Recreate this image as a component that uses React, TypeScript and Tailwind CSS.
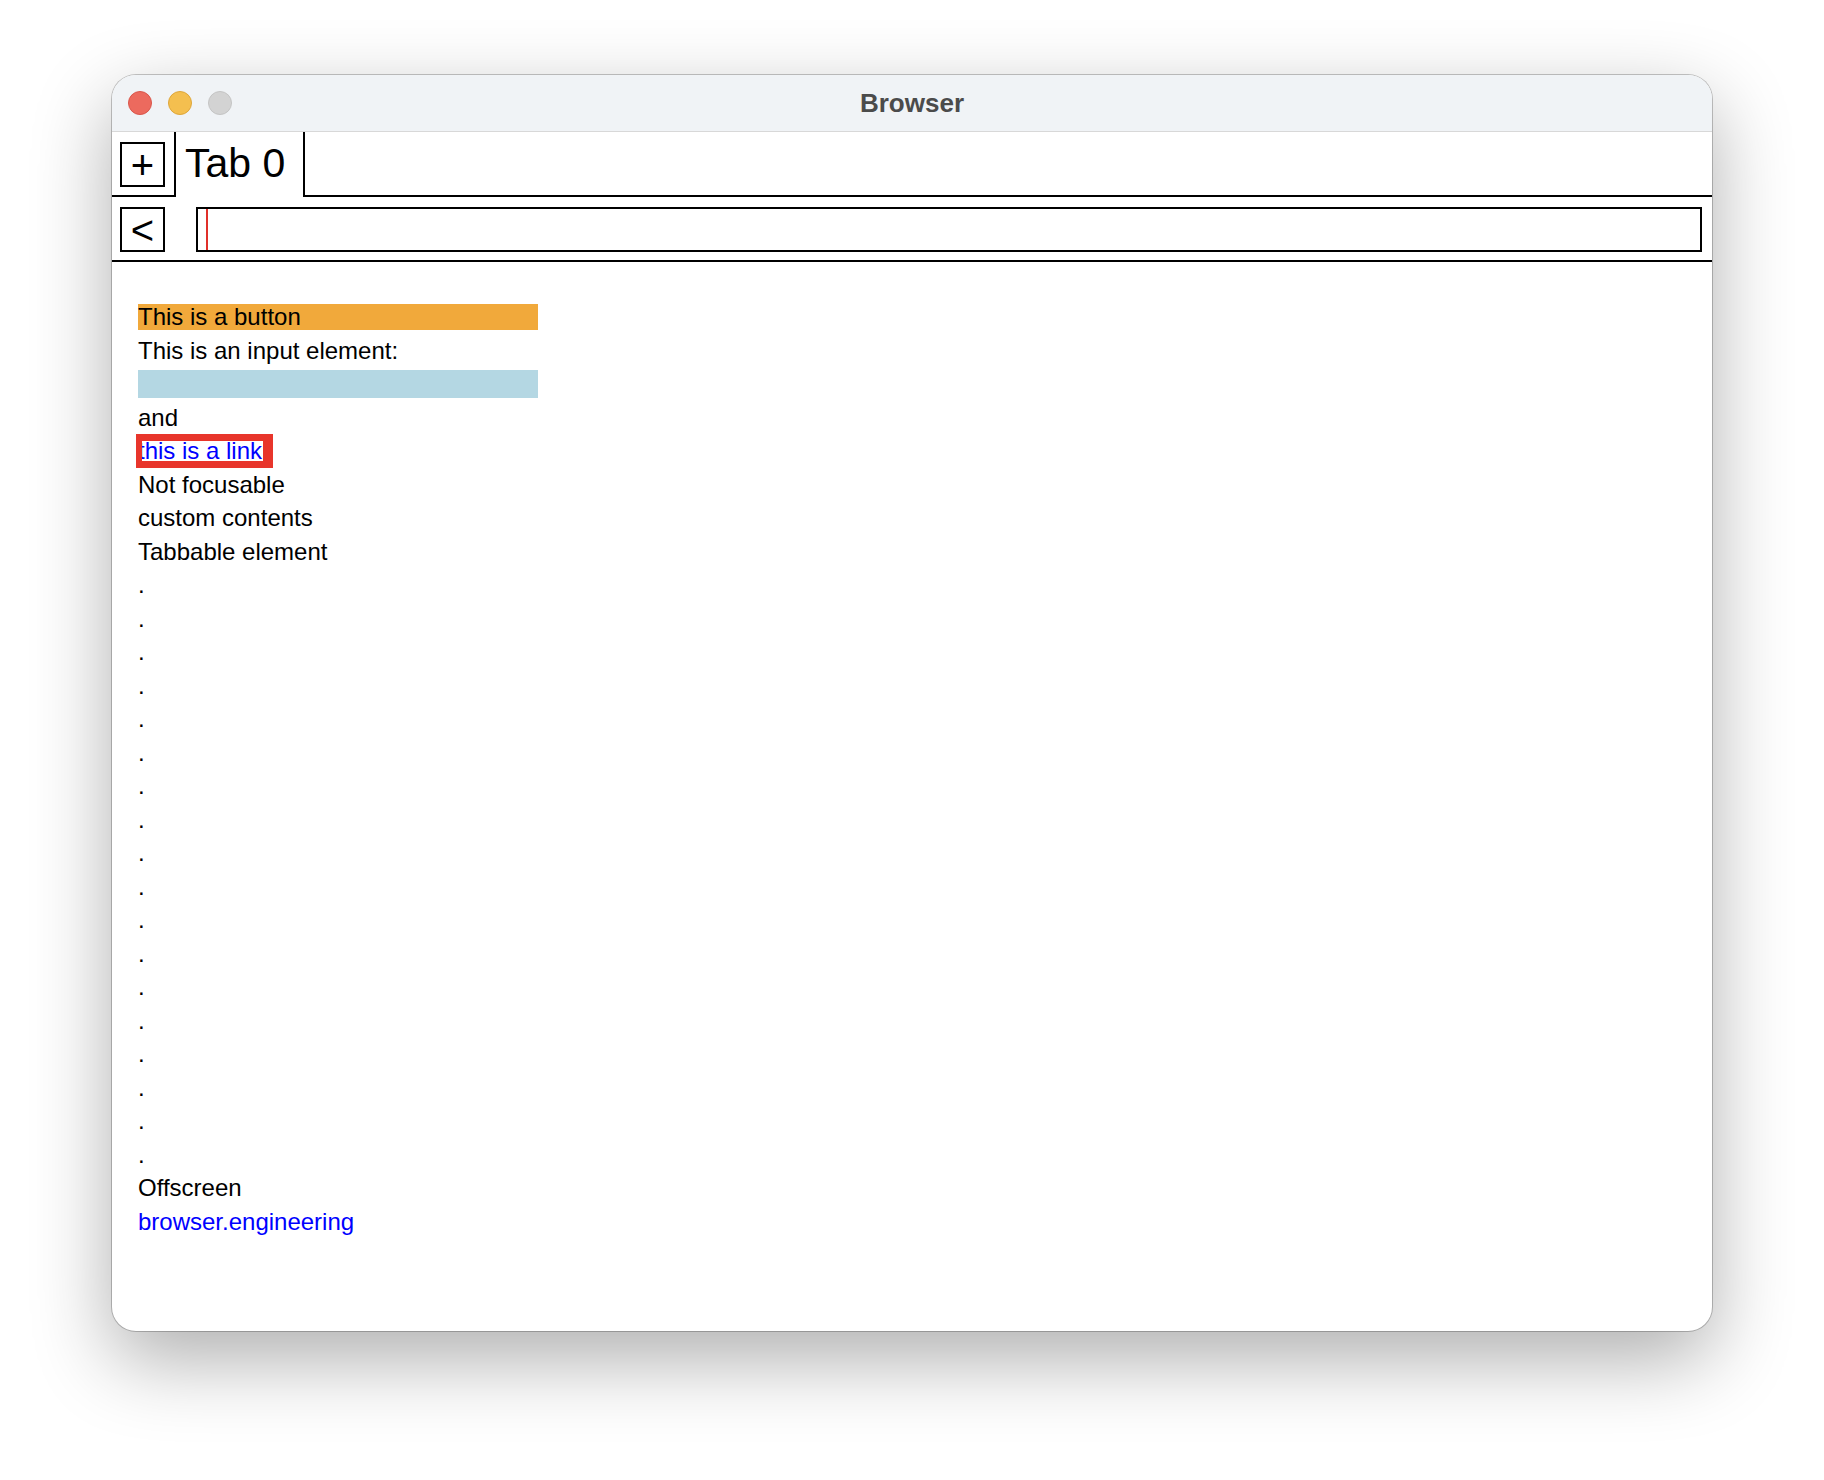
export default function App() {
  const dots = Array.from({ length: 18 }, (_, i) => i);
  return (
    <div className="w-[1824px] h-[1480px] bg-white pt-[75px] pl-[112px] font-['Liberation_Sans',Arial,sans-serif]">
      <div className="w-[1600px] h-[1256px] rounded-[24px] overflow-hidden bg-white shadow-[0_0_0_1px_rgba(0,0,0,0.22),0_28px_80px_rgba(0,0,0,0.32)] flex flex-col">
        {/* Title bar */}
        <div className="h-[57px] shrink-0 bg-[#f0f3f6] border-b border-[#d8d8d8] grid grid-cols-[1fr_auto_1fr] items-center">
          <div className="flex items-center gap-[16px] pl-[16px]">
            <span className="block w-[24px] h-[24px] rounded-full bg-[#ec6a5e] border border-[#d9564b]" />
            <span className="block w-[24px] h-[24px] rounded-full bg-[#f4bf4f] border border-[#dea63a]" />
            <span className="block w-[24px] h-[24px] rounded-full bg-[#d3d3d3] border border-[#c4c4c4]" />
          </div>
          <div className="text-[26px] font-bold leading-none text-[#4b4b4b]">Browser</div>
          <div />
        </div>

        {/* Tab row */}
        <div className="h-[65px] shrink-0 flex">
          <div className="w-[62px] h-full border-b-2 border-black pl-[8px] pt-[10px]">
            <div className="w-[45px] h-[45px] border-2 border-black flex items-center justify-center text-[40px] leading-none text-black">
              +
            </div>
          </div>
          <div className="w-[131px] h-full border-x-2 border-black pl-[9px] pt-[11px] text-[41px] leading-none text-black">
            Tab 0
          </div>
          <div className="flex-1 h-full border-b-2 border-black" />
        </div>

        {/* Address row */}
        <div className="h-[65px] shrink-0 border-b-2 border-black flex items-start pt-[10px] pl-[8px] pr-[10px]">
          <div className="w-[45px] h-[45px] border-2 border-black flex items-center justify-center text-[40px] leading-none text-black">
            &lt;
          </div>
          <div className="ml-[31px] flex-1 h-[45px] border-2 border-black flex">
            <div className="ml-[8px] w-[2px] h-full bg-[#e0302a]" />
          </div>
        </div>

        {/* Content */}
        <div className="flex-1 pt-[38px] pl-[26px] text-[24px] text-black">
          <div className="h-[33.5px] pt-[4px]">
            <div className="w-[400px] h-[26px] bg-[#f1a93b] leading-[26px]">This is a button</div>
          </div>
          <div className="h-[33.5px] leading-[33.5px]">This is an input element:</div>
          <div className="h-[33.5px] pt-[3px]">
            <div className="w-[400px] h-[28px] bg-[#b4d7e3]" />
          </div>
          <div className="h-[33.5px] leading-[33.5px]">and</div>
          <div className="relative h-[33.5px] leading-[33.5px] text-[#0000ff]">
            this is a link
            <div className="absolute left-[-2px] top-0 w-[137px] h-[34px] border-solid border-l-[6px] border-t-[7px] border-r-[10px] border-b-[7px] border-[#e8352b]" />
          </div>
          <div className="h-[33.5px] leading-[33.5px]">Not focusable</div>
          <div className="h-[33.5px] leading-[33.5px]">custom contents</div>
          <div className="h-[33.5px] leading-[33.5px]">Tabbable element</div>
          {dots.map((i) => (
            <div key={i} className="h-[33.5px] leading-[33.5px]">.</div>
          ))}
          <div className="h-[33.5px] leading-[33.5px]">Offscreen</div>
          <div className="h-[33.5px] leading-[33.5px] text-[#0000ff]">browser.engineering</div>
        </div>
      </div>
    </div>
  );
}
